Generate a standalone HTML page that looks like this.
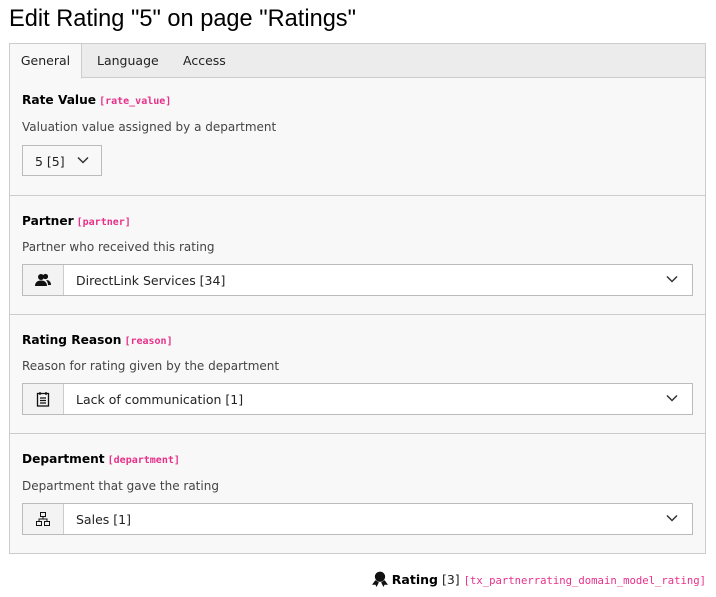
<!DOCTYPE html>
<html><head><style>
*{box-sizing:border-box;margin:0;padding:0}
body{width:716px;height:597px;background:#fff;font-family:"DejaVu Sans",Verdana,sans-serif;font-size:12px;color:#333;position:relative;overflow:hidden}
h1{position:absolute;left:9px;top:6px;font-family:"Liberation Sans",sans-serif;font-weight:normal;font-size:23.6px;color:#000}
.panel{position:absolute;left:9px;top:43px;width:697px;height:511px;border:1px solid #ccc;background:#f8f8f8}
.tabs{height:34px;background:#ececec;border-bottom:1px solid #ccc;position:relative}
.tab{position:absolute;top:0;height:34px;line-height:33px;font-size:12.5px;color:#222}
.tab.act{left:0;width:72px;background:#f8f8f8;border-right:1px solid #ccc;border-bottom:1px solid #f8f8f8;height:35px;text-align:center}
.sec{position:absolute;left:0;width:695px;border-top:1px solid #ccc}
.lbl{position:absolute;left:12px;font-weight:bold;color:#000;font-size:12.2px}
.lbl code{font-family:"DejaVu Sans Mono",monospace;font-size:10px;color:#e8308a;font-weight:bold;margin-left:3px}
.desc{position:absolute;left:12px;color:#444}
.sel{position:absolute;left:12px;width:671px;height:32px;border:1px solid #bbb;background:#fff}
.ic{position:absolute;left:0;top:0;width:41px;height:30px;background:#f3f3f3;border-right:1px solid #ccc;display:flex;align-items:center;justify-content:center}
.val{position:absolute;left:53px;top:8px;color:#222;font-size:12.5px}
.chev{position:absolute;right:14px;top:10px}
</style></head><body>
<h1>Edit Rating "5" on page "Ratings"</h1>
<div class="panel">
<div class="tabs"><div class="tab act">General</div><div class="tab" style="left:87px">Language</div><div class="tab" style="left:173px">Access</div></div>
<div class="sec" style="top:34px;border-top:none;height:117px">
 <div class="lbl" style="top:15px">Rate Value<code>[rate_value]</code></div>
 <div class="desc" style="top:42px">Valuation value assigned by a department</div>
 <div class="sel" style="top:67px;width:80px;height:31px;background:#f8f8f8"><span class="val" style="left:12px">5 [5]</span><svg class="chev" style="right:12px" width="12" height="8" viewBox="0 0 12 8"><path d="M1 1.5l5 5 5-5" fill="none" stroke="#333" stroke-width="1.5"/></svg></div>
</div>
<div class="sec" style="top:151px;height:119px">
 <div class="lbl" style="top:18px">Partner<code>[partner]</code></div>
 <div class="desc" style="top:44px">Partner who received this rating</div>
 <div class="sel" style="top:68px"><div class="ic"><svg width="16" height="14" viewBox="0 0 16 14"><circle cx="6" cy="4" r="3" fill="#111"/><path d="M0 13c0-4 3-5.5 6-5.5s6 1.5 6 5.5z" fill="#111"/><circle cx="10.5" cy="3.5" r="2.6" fill="#111"/><path d="M11 7c3 0 5 1.5 5 5h-3c0-2-1-4-2-5z" fill="#111"/></svg></div><span class="val">DirectLink Services [34]</span><svg class="chev" width="12" height="8" viewBox="0 0 12 8"><path d="M1 1.5l5 5 5-5" fill="none" stroke="#333" stroke-width="1.5"/></svg></div>
</div>
<div class="sec" style="top:270px;height:119px">
 <div class="lbl" style="top:18px">Rating Reason<code>[reason]</code></div>
 <div class="desc" style="top:44px">Reason for rating given by the department</div>
 <div class="sel" style="top:68px"><div class="ic"><svg width="14" height="16" viewBox="0 0 14 16"><rect x="1.5" y="2.5" width="11" height="12.5" fill="none" stroke="#111" stroke-width="1.3"/><path d="M4 1v3M10 1v3M4 7h6M4 9.5h6M4 12h6" stroke="#111" stroke-width="1.3"/></svg></div><span class="val">Lack of communication [1]</span><svg class="chev" width="12" height="8" viewBox="0 0 12 8"><path d="M1 1.5l5 5 5-5" fill="none" stroke="#333" stroke-width="1.5"/></svg></div>
</div>
<div class="sec" style="top:389px;height:120px">
 <div class="lbl" style="top:18px">Department<code>[department]</code></div>
 <div class="desc" style="top:45px">Department that gave the rating</div>
 <div class="sel" style="top:69px"><div class="ic"><svg width="14" height="14" viewBox="0 0 14 14"><rect x="4.5" y="0.5" width="5" height="4" fill="none" stroke="#111"/><rect x="0.5" y="9.5" width="5" height="4" fill="none" stroke="#111"/><rect x="8.5" y="9.5" width="5" height="4" fill="none" stroke="#111"/><path d="M7 4.5v2.5M3 9.5V7h8v2.5" fill="none" stroke="#111"/></svg></div><span class="val">Sales [1]</span><svg class="chev" width="12" height="8" viewBox="0 0 12 8"><path d="M1 1.5l5 5 5-5" fill="none" stroke="#333" stroke-width="1.5"/></svg></div>
</div>
</div>
<div style="position:absolute;right:10px;top:571px;font-size:12.5px;color:#222;white-space:nowrap">
<svg width="16" height="16" viewBox="0 0 14 14" style="vertical-align:-3px"><circle cx="7" cy="5" r="4.5" fill="#111"/><path d="M3 8l-3 4h3l1 2 2-4zM11 8l3 4h-3l-1 2-2-4z" fill="#111"/></svg>
<b style="color:#000">Rating</b> [3] <span style="font-family:'DejaVu Sans Mono',monospace;font-size:10.6px;color:#e8308a">[tx_partnerrating_domain_model_rating]</span></div>
</body></html>
